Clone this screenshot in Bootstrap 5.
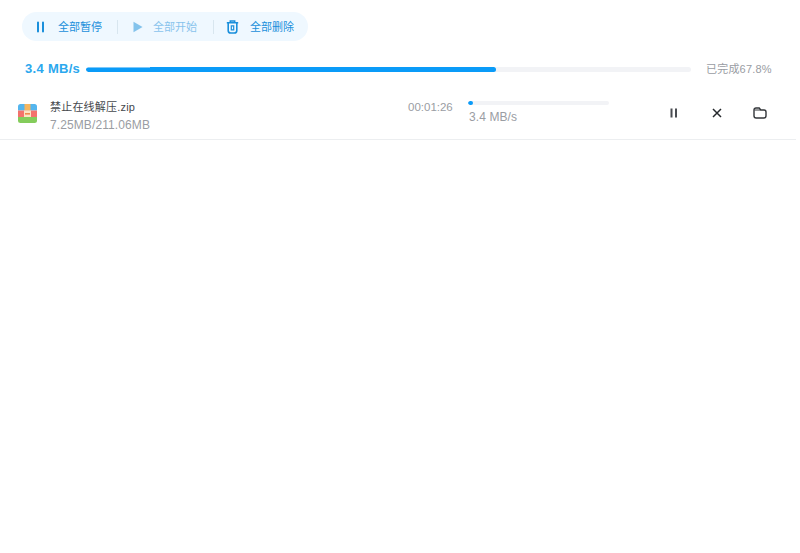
<!DOCTYPE html>
<html lang="zh">
<head>
<meta charset="utf-8">
<title>下载</title>
<link href="https://cdn.jsdelivr.net/npm/bootstrap@5.3.0/dist/css/bootstrap.min.css" rel="stylesheet">
<style>
html,body{height:100%;background:#fff;font-family:"Liberation Sans","Noto Sans CJK SC",sans-serif;}
body{overflow:hidden;}
.dl-page{padding:12px 4px 0 0;}
.dl-pill{margin-left:22px;width:286px;height:29px;background:#eff8ff;border-radius:15px;padding-left:14px;font-size:11px;line-height:16px;color:#1a8fdb;white-space:nowrap;}
.dl-action{display:flex;align-items:center;flex:none;}
.dl-action svg{flex:none;display:block;}
.dl-a1 svg{margin-right:12px;}
.dl-a2{opacity:.5;}
.dl-a2 svg{margin-right:10px;}
.dl-a3 svg{margin-right:11px;}
.dl-sep{width:1px;height:14px;background:#d8e6ef;flex:none;}
.dl-gap1{margin-left:15px;margin-right:15px;}
.dl-gap2{margin-left:16px;margin-right:12px;}
.dl-total{margin-top:21px;height:14px;padding-left:25px;}
.dl-speed{width:61px;flex:none;font-size:13px;font-weight:700;color:#2ba8ee;line-height:14px;white-space:nowrap;letter-spacing:.3px;}
.dl-track{height:5px;background:#f2f3f6;border-radius:3px;overflow:hidden;}
.dl-track-main{width:605px;flex:none;}
.dl-fill{height:100%;background:#0a9bf8;border-radius:3px;}
.dl-fill-main{background:linear-gradient(#7cc8fa,#7cc8fa) left top/64px 1px no-repeat,#0a9bf8;}
.dl-done{margin-left:15px;font-size:11px;color:#999ca3;white-space:nowrap;line-height:14px;letter-spacing:.2px;}
.dl-row{margin-top:14px;height:50px;border-bottom:1px solid #eceef0;padding-left:18px;width:796px;}
.dl-thumb{width:19px;height:19px;flex:none;display:block;margin-top:14px;}
.dl-info{width:358px;margin-left:13px;flex:none;padding-top:9px;}
.dl-name{font-size:11px;line-height:17px;color:#45484d;letter-spacing:.2px;}
.dl-size{font-size:12px;line-height:17px;color:#9a9da3;margin-top:1px;letter-spacing:.1px;}
.dl-time{width:60px;flex:none;font-size:11.5px;color:#9a9da3;line-height:17px;padding-top:9px;}
.dl-mini{width:141px;flex:none;padding-top:11px;}
.dl-track-mini{height:4px;}
.dl-mini-speed{font-size:12px;line-height:16px;color:#9a9da3;margin-top:4px;padding-left:1px;letter-spacing:.1px;}
.dl-ops{margin-left:55px;gap:23px;margin-top:15px;height:16px;}
.dl-op{width:20px;height:16px;display:flex;align-items:center;justify-content:center;padding:0;border:0;background:none;}
</style>
</head>
<body>
<div class="dl-page">
  <div class="dl-pill d-flex align-items-center">
    <div class="dl-action dl-a1">
      <svg width="10" height="12" viewBox="0 0 10 12"><path d="M2 1.500v9M7 1.500v9" stroke="#1a8fdb" stroke-width="2" stroke-linecap="round" fill="none"/></svg>
      <span>全部暂停</span>
    </div>
    <div class="dl-sep dl-gap1"></div>
    <div class="dl-action dl-a2">
      <svg width="10" height="12" viewBox="0 0 10 12"><path d="M.5 .8 9.500 6 .5 11.200z" fill="#1a8fdb"/></svg>
      <span>全部开始</span>
    </div>
    <div class="dl-sep dl-gap2"></div>
    <div class="dl-action dl-a3">
      <svg width="13" height="14" viewBox="0 0 13 14"><path d="M.8 2.700h11.400M4.300 2.400V1h4.400v1.400" stroke="#1a8fdb" stroke-width="1.500" fill="none"/><path d="M2.200 3v7.400c0 1.500 1 2.600 2.500 2.600h3.600c1.500 0 2.500-1.100 2.500-2.600V3" stroke="#1a8fdb" stroke-width="1.600" fill="none"/><path d="M5.300 5.800h2.400v4H5.300z" stroke="#1a8fdb" stroke-width="1.200" fill="none"/></svg>
      <span>全部删除</span>
    </div>
  </div>

  <div class="dl-total d-flex align-items-center">
    <div class="dl-speed">3.4 MB/s</div>
    <div class="dl-track dl-track-main"><div class="dl-fill dl-fill-main" style="width:67.8%"></div></div>
    <div class="dl-done">已完成67.8%</div>
  </div>

  <div class="dl-row d-flex align-items-start">
    <svg class="dl-thumb" viewBox="0 0 19 19">
      <defs><clipPath id="dlclip"><rect width="19" height="19" rx="2.500"/></clipPath></defs>
      <g clip-path="url(#dlclip)">
        <rect width="19" height="6.500" fill="#54b5ee"/>
        <rect y="6.500" width="19" height="6.500" fill="#f3726c"/>
        <rect y="13" width="19" height="6" fill="#84cc5b"/>
        <rect x="6.500" width="6" height="6.500" fill="#f5b660"/>
        <rect x="6" y="6.500" width="7" height="6.500" fill="#fbe3c4"/>
        <rect x="7" y="9" width="5" height="1.600" fill="#ee8a4a"/>
      </g>
    </svg>
    <div class="dl-info">
      <div class="dl-name">禁止在线解压.zip</div>
      <div class="dl-size">7.25MB/211.06MB</div>
    </div>
    <div class="dl-time">00:01:26</div>
    <div class="dl-mini">
      <div class="dl-track dl-track-mini"><div class="dl-fill" style="width:3.4%"></div></div>
      <div class="dl-mini-speed">3.4 MB/s</div>
    </div>
    <div class="dl-ops d-flex">
      <button class="dl-op" type="button" aria-label="暂停"><svg width="10" height="10" viewBox="0 0 10 10"><path d="M2.500 .5v9M7 .5v9" stroke="#4a4d52" stroke-width="2" fill="none"/></svg></button>
      <button class="dl-op" type="button" aria-label="取消"><svg width="10" height="10" viewBox="0 0 10 10"><path d="M1 1l8 8M9 1 1 9" stroke="#25282c" stroke-width="1.500" fill="none"/></svg></button>
      <button class="dl-op" type="button" aria-label="打开文件夹"><svg width="14" height="12" viewBox="0 0 14 12"><path d="M1 3c0-1.200.8-2 2-2h3.200l1.600 2H11c1.200 0 2 .8 2 2v3.800c0 1.300-.9 2.200-2.200 2.200H3.200C1.900 11 1 10.100 1 8.800z" stroke="#33363a" stroke-width="1.400" fill="none"/><path d="M1.400 3h6" stroke="#33363a" stroke-width="1" fill="none"/></svg></button>
    </div>
  </div>
</div>
<script src="https://cdn.jsdelivr.net/npm/bootstrap@5.3.0/dist/js/bootstrap.bundle.min.js"></script>
</body>
</html>
